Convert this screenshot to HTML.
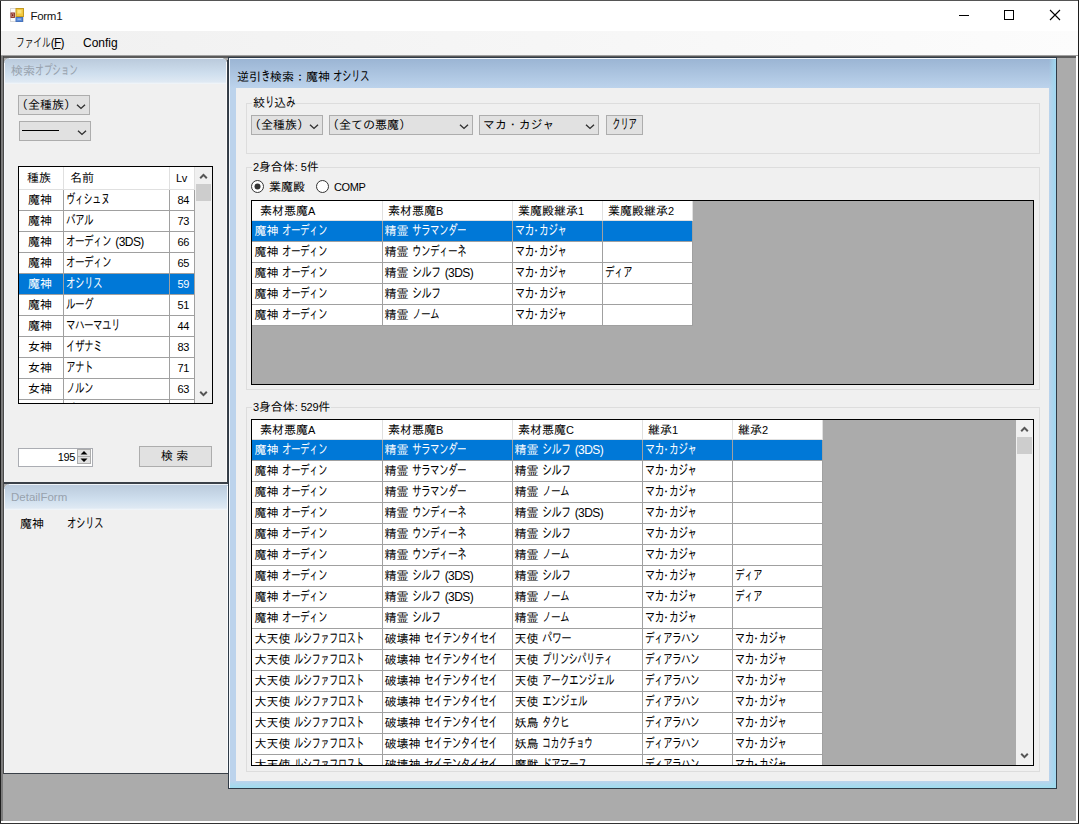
<!DOCTYPE html>
<html lang="ja"><head><meta charset="utf-8"><title>Form1</title>
<style>
html,body{margin:0;padding:0}
body{width:1079px;height:824px;overflow:hidden;position:relative;background:#ababab;
 font-family:"Liberation Sans","IPAGothic",sans-serif;font-size:12px;color:#000;}
div,span,svg{position:absolute;box-sizing:content-box}
.t{white-space:nowrap;line-height:14px}
.k{position:relative;display:inline-block;font-size:14px;letter-spacing:-1px;transform-origin:0 50%;white-space:nowrap;line-height:12px}
.l{position:relative;font-size:11px;letter-spacing:-0.35px}
.lp{position:relative;font-size:12px;letter-spacing:-0.6px;margin-left:1px}
.md{position:relative;display:inline-block;width:5px;text-indent:-3.5px;overflow:visible}
.ui{font-family:"Liberation Sans","Noto Sans CJK JP",sans-serif;-webkit-text-stroke:0}
.grid{border:1px solid #000;background:#ababab;overflow:hidden}
.gh{background:#fff;border-right:1px solid #e0e0e0;border-bottom:1px solid #e0e0e0;white-space:nowrap;overflow:hidden}
.gc{background:#fff;border-right:1px solid #a0a0a0;border-bottom:1px solid #a0a0a0;white-space:nowrap;overflow:hidden}
.gc.sel{background:#0078d7;color:#fff}
.vs{background:#f0f0f0}
.vs .arr{left:0}
.vs .thumb{left:1px;width:15px;background:#cdcdcd}
.combo{background:#e1e1e1;border:1px solid #adadad;overflow:hidden;font-size:12px}
.combo .ct{top:0;white-space:nowrap}
.combo .ct span{position:relative}
.combo .ca{right:3px;top:8px}
.pl{margin-left:-5px}
.pr{margin-right:-5px}
.gb{border:1px solid #dddddd}
.gbl{background:#f0f0f0;white-space:nowrap;line-height:14px;padding:0 1px}
</style></head><body>

<div style="left:0px;top:0px;width:1079px;height:31px;background:#fff"></div>
<div style="left:0px;top:31px;width:1079px;height:24px;background:linear-gradient(90deg,#f0f0f0,#fcfcfc)"></div>
<div style="left:0px;top:55px;width:1079px;height:1px;background:#a0a0a0"></div>
<div style="left:0px;top:56px;width:1079px;height:2px;background:#5a5a5a"></div>
<svg style="left:10px;top:8px" width="14" height="14" viewBox="0 0 14 14"><rect x="0.5" y="0.5" width="13" height="13" fill="#fbfbfb" stroke="#d9d9d9"/><rect x="6" y="0.5" width="7.5" height="8" fill="#f3c93f" stroke="#c59b23" stroke-width="1"/><rect x="7.5" y="2" width="4" height="3.5" fill="#f9e27e"/><rect x="1" y="5" width="3.4" height="4.4" fill="#d8a9a0" stroke="#8c2c20" stroke-width="1"/><rect x="2" y="6.2" width="1.4" height="2" fill="#7a2318"/><rect x="6" y="9.5" width="6.5" height="4" fill="#5c8dd8" stroke="#4673bd" stroke-width="1"/><rect x="7.5" y="10.6" width="3.5" height="1.2" fill="#9dbdf0"/></svg>
<div class="t ui" style="left:30.5px;top:8.5px;font-size:11.5px;line-height:15px;letter-spacing:-0.3px;color:#111">Form1</div>
<div class="t ui" style="left:16px;top:36px;line-height:15px"><span style="position:relative;display:inline-block;transform:scaleX(.72);transform-origin:0 50%;margin-right:-13.4px;font-weight:350">ファイル</span><span style="position:relative;font-size:12px;letter-spacing:-0.7px">(<u>F</u>)</span></div>
<div class="t ui" style="left:83px;top:36px;line-height:15px">Config</div>
<svg style="left:950px;top:1px" width="128" height="30" viewBox="0 0 128 30"><path d="M9 14.5 H19" stroke="#000" stroke-width="1"/><rect x="54.5" y="9.5" width="9" height="9" fill="none" stroke="#000" stroke-width="1"/><path d="M100 9 L110 19 M110 9 L100 19" stroke="#000" stroke-width="1.1"/></svg>
<div style="left:0px;top:0px;width:1px;height:824px;background:#1e1e1e"></div>
<div style="left:0px;top:0px;width:1079px;height:1px;background:#555"></div>
<div style="left:1px;top:56px;width:2px;height:766px;background:#7c7c7c"></div>
<div style="left:3px;top:56px;width:1px;height:718px;background:#4a4a4a"></div>
<div style="left:1076px;top:56px;width:2px;height:767px;background:#fff"></div>
<div style="left:1078px;top:0px;width:1px;height:824px;background:#1e1e1e"></div>
<div style="left:1px;top:821px;width:1077px;height:2px;background:#fff"></div>
<div style="left:0px;top:823px;width:1079px;height:1px;background:#333"></div>
<div style="left:4px;top:58px;width:223px;height:425px;background:#f0f0f0;border-radius:6px 6px 0 0;"></div>
<div style="left:4px;top:58px;width:223px;height:26px;background:linear-gradient(#b9c9db 0%,#cfdfee 60%,#dfe9f3 92%,#f4f7fa 100%);border-radius:6px 6px 0 0"></div>
<div style="left:226px;top:62px;width:1px;height:421px;background:#fafafa"></div>
<div style="left:227px;top:60px;width:1px;height:423px;background:#3a4048"></div>
<div style="left:9px;top:58px;width:214px;height:1px;background:#eef3f8"></div>
<div style="left:4px;top:63px;width:1px;height:419px;background:#f6f8fb"></div>
<div class="t " style="left:11px;top:64px;color:#98a2ad">検索<span class="k" style="transform:scaleX(0.654);margin-right:-22.50px">オプション</span></div>
<div class="combo" style="left:18px;top:95px;width:70px;height:18px"><span class="ct" style="left:2px;line-height:18px"><span class="pl">（</span>全種族<span class="pr">）</span></span><svg class="ca" width="10" height="6" viewBox="0 0 10 6"><path d="M1 0.7 L5 4.4 L9 0.7" fill="none" stroke="#303030" stroke-width="1.4"/></svg></div>
<div class="combo" style="left:19px;top:121px;width:70px;height:18px"><span class="ct" style="left:2px;line-height:18px"><span style="display:inline-block;width:37px;height:1px;background:#000;vertical-align:middle;top:-1px"></span></span><svg class="ca" width="10" height="6" viewBox="0 0 10 6"><path d="M1 0.7 L5 4.4 L9 0.7" fill="none" stroke="#303030" stroke-width="1.4"/></svg></div>
<div class="grid" style="left:18px;top:166px;width:193px;height:236px"><div class="gh" style="left:0px;top:0;width:36px;height:22px;line-height:23px;padding-left:8px">種族</div><div class="gh" style="left:45px;top:0;width:99px;height:22px;line-height:23px;padding-left:6px">名前</div><div class="gh" style="left:151px;top:0;width:18px;height:22px;line-height:23px;padding-left:6px"><span class="l">Lv</span></div><div class="gc" style="left:0px;top:23px;height:20px;line-height:21px;padding-left:9px;width:35px;">魔神</div><div class="gc" style="left:45px;top:23px;height:20px;line-height:21px;padding-left:2px;width:103px;"><span class="k" style="transform:scaleX(0.669);margin-right:-21.50px">ヴィシュヌ</span></div><div class="gc" style="left:151px;top:23px;height:20px;line-height:21px;text-align:right;padding-right:5px;width:19px;"><span class="l">84</span></div><div class="gc" style="left:0px;top:44px;height:20px;line-height:21px;padding-left:9px;width:35px;">魔神</div><div class="gc" style="left:45px;top:44px;height:20px;line-height:21px;padding-left:2px;width:103px;"><span class="k" style="transform:scaleX(0.692);margin-right:-12.00px">バアル</span></div><div class="gc" style="left:151px;top:44px;height:20px;line-height:21px;text-align:right;padding-right:5px;width:19px;"><span class="l">73</span></div><div class="gc" style="left:0px;top:65px;height:20px;line-height:21px;padding-left:9px;width:35px;">魔神</div><div class="gc" style="left:45px;top:65px;height:20px;line-height:21px;padding-left:2px;width:103px;"><span class="k" style="transform:scaleX(0.692);margin-right:-20.00px">オーディン</span> <span class="lp">(3DS)</span></div><div class="gc" style="left:151px;top:65px;height:20px;line-height:21px;text-align:right;padding-right:5px;width:19px;"><span class="l">66</span></div><div class="gc" style="left:0px;top:86px;height:20px;line-height:21px;padding-left:9px;width:35px;">魔神</div><div class="gc" style="left:45px;top:86px;height:20px;line-height:21px;padding-left:2px;width:103px;"><span class="k" style="transform:scaleX(0.692);margin-right:-20.00px">オーディン</span></div><div class="gc" style="left:151px;top:86px;height:20px;line-height:21px;text-align:right;padding-right:5px;width:19px;"><span class="l">65</span></div><div class="gc sel" style="left:0px;top:107px;height:20px;line-height:21px;padding-left:9px;width:35px;">魔神</div><div class="gc sel" style="left:45px;top:107px;height:20px;line-height:21px;padding-left:2px;width:103px;"><span class="k" style="transform:scaleX(0.692);margin-right:-16.00px">オシリス</span></div><div class="gc sel" style="left:151px;top:107px;height:20px;line-height:21px;text-align:right;padding-right:5px;width:19px;"><span class="l">59</span></div><div class="gc" style="left:0px;top:128px;height:20px;line-height:21px;padding-left:9px;width:35px;">魔神</div><div class="gc" style="left:45px;top:128px;height:20px;line-height:21px;padding-left:2px;width:103px;"><span class="k" style="transform:scaleX(0.692);margin-right:-12.00px">ルーグ</span></div><div class="gc" style="left:151px;top:128px;height:20px;line-height:21px;text-align:right;padding-right:5px;width:19px;"><span class="l">51</span></div><div class="gc" style="left:0px;top:149px;height:20px;line-height:21px;padding-left:9px;width:35px;">魔神</div><div class="gc" style="left:45px;top:149px;height:20px;line-height:21px;padding-left:2px;width:103px;"><span class="k" style="transform:scaleX(0.692);margin-right:-24.00px">マハーマユリ</span></div><div class="gc" style="left:151px;top:149px;height:20px;line-height:21px;text-align:right;padding-right:5px;width:19px;"><span class="l">44</span></div><div class="gc" style="left:0px;top:170px;height:20px;line-height:21px;padding-left:9px;width:35px;">女神</div><div class="gc" style="left:45px;top:170px;height:20px;line-height:21px;padding-left:2px;width:103px;"><span class="k" style="transform:scaleX(0.692);margin-right:-16.00px">イザナミ</span></div><div class="gc" style="left:151px;top:170px;height:20px;line-height:21px;text-align:right;padding-right:5px;width:19px;"><span class="l">83</span></div><div class="gc" style="left:0px;top:191px;height:20px;line-height:21px;padding-left:9px;width:35px;">女神</div><div class="gc" style="left:45px;top:191px;height:20px;line-height:21px;padding-left:2px;width:103px;"><span class="k" style="transform:scaleX(0.692);margin-right:-12.00px">アナト</span></div><div class="gc" style="left:151px;top:191px;height:20px;line-height:21px;text-align:right;padding-right:5px;width:19px;"><span class="l">71</span></div><div class="gc" style="left:0px;top:212px;height:20px;line-height:21px;padding-left:9px;width:35px;">女神</div><div class="gc" style="left:45px;top:212px;height:20px;line-height:21px;padding-left:2px;width:103px;"><span class="k" style="transform:scaleX(0.692);margin-right:-12.00px">ノルン</span></div><div class="gc" style="left:151px;top:212px;height:20px;line-height:21px;text-align:right;padding-right:5px;width:19px;"><span class="l">63</span></div><div class="gc" style="left:0px;top:233px;height:20px;line-height:21px;padding-left:9px;width:35px;">女神</div><div class="gc" style="left:45px;top:233px;height:20px;line-height:21px;padding-left:2px;width:103px;"><span class="k" style="transform:scaleX(0.692);margin-right:-24.00px">パールバティ</span></div><div class="gc" style="left:151px;top:233px;height:20px;line-height:21px;text-align:right;padding-right:5px;width:19px;"><span class="l">57</span></div><div class="vs" style="left:176px;top:0;width:17px;height:236px"><svg class="arr" style="top:0" width="17" height="17" viewBox="0 0 17 17"><path d="M5.2 11.2 L8.5 7.9 L11.8 11.2" fill="none" stroke="#555" stroke-width="2"/></svg><div class="thumb" style="top:17px;height:17px"></div><svg class="arr" style="bottom:0" width="17" height="17" viewBox="0 0 17 17"><path d="M5.2 5.8 L8.5 9.1 L11.8 5.8" fill="none" stroke="#555" stroke-width="2"/></svg></div></div>
<div style="left:18px;top:448px;width:73px;height:17px;background:#fff;border:1px solid #abadb3"></div>
<div class="t " style="left:30px;top:449.5px;width:45px;text-align:right"><span class="l">195</span></div>
<div style="left:77px;top:449px;width:14px;height:15px;background:#e1e1e1;box-shadow:inset 0 0 0 1px #adadad"></div>
<svg style="left:77px;top:449px" width="14" height="15" viewBox="0 0 14 15"><path d="M3.5 5.5 L7 2 L10.5 5.5 Z M3.5 9.5 L7 13 L10.5 9.5 Z" fill="#000"/><path d="M0 7.5 H14" stroke="#adadad"/></svg>
<div style="left:139px;top:446px;width:71px;height:19px;background:#e1e1e1;border:1px solid #adadad"></div>
<div class="t " style="left:161px;top:449px;">検 索</div>
<div style="left:4px;top:482px;width:224px;height:2px;background:#3a4048"></div>
<div style="left:4px;top:484px;width:224px;height:289px;background:#f0f0f0;border-radius:6px 0 0 0"></div>
<div style="left:4px;top:484px;width:224px;height:26px;background:linear-gradient(#b9c9db 0%,#cfdfee 60%,#dfe9f3 92%,#f4f7fa 100%);border-radius:6px 0 0 0"></div>
<div style="left:227px;top:486px;width:1px;height:287px;background:#f8fafc"></div>
<div style="left:4px;top:773px;width:224px;height:1px;background:#3a4048"></div>
<div style="left:9px;top:484px;width:219px;height:1px;background:#eef3f8"></div>
<div style="left:4px;top:489px;width:1px;height:284px;background:#f6f8fb"></div>
<div class="t ui" style="left:11px;top:490px;color:#98a2ad;line-height:15px;font-size:11.5px">DetailForm</div>
<div class="t " style="left:20px;top:517px;">魔神</div>
<div class="t " style="left:67px;top:517px;"><span class="k" style="transform:scaleX(0.692);margin-right:-16.00px">オシリス</span></div>
<div style="left:228px;top:57px;width:827px;height:730px;border:1px solid #2f3a46;background:linear-gradient(#9ab4d3 0px,#bcd3ec 30px,#bcd3ec 100%)"></div>
<div style="left:1049px;top:59px;width:7px;height:728px;background:linear-gradient(90deg,rgba(159,215,240,0) 0%,rgba(159,215,240,.55) 45%,#9fd7f0 100%)"></div>
<div style="left:229px;top:781px;width:827px;height:7px;background:linear-gradient(rgba(159,220,238,0) 0%,rgba(159,220,238,.5) 45%,#9fdcee 100%)"></div>
<div style="left:229px;top:58px;width:827px;height:1px;background:#f4f8fc"></div>
<div style="left:229px;top:58px;width:1px;height:730px;background:#f4f8fc"></div>
<div style="left:236px;top:88px;width:813px;height:693px;background:#f0f0f0"></div>
<div class="t " style="left:237px;top:70px;">逆引<span class="k" style="transform:scaleX(0.692);margin-right:-4.00px">き</span>検索：魔神 <span class="k" style="transform:scaleX(0.692);margin-right:-16.00px">オシリス</span></div>
<div class="gb" style="left:246px;top:103px;width:792px;height:49px;"></div>
<div class="gbl" style="left:252px;top:96px">絞<span class="k" style="transform:scaleX(0.692);margin-right:-4.00px">り</span>込<span class="k" style="transform:scaleX(0.692);margin-right:-4.00px">み</span></div>
<div class="gb" style="left:246px;top:167px;width:792px;height:221px;"></div>
<div class="gbl" style="left:252px;top:160px"><span class="l">2</span>身合体<span class="l">:</span> <span class="l">5</span>件</div>
<div class="gb" style="left:246px;top:407px;width:792px;height:363px;"></div>
<div class="gbl" style="left:252px;top:400px"><span class="l">3</span>身合体<span class="l">:</span> <span class="l">529</span>件</div>
<div class="combo" style="left:251px;top:115px;width:70px;height:18px"><span class="ct" style="left:2px;line-height:18px"><span class="pl">（</span>全種族<span class="pr">）</span></span><svg class="ca" width="10" height="6" viewBox="0 0 10 6"><path d="M1 0.7 L5 4.4 L9 0.7" fill="none" stroke="#303030" stroke-width="1.4"/></svg></div>
<div class="combo" style="left:329px;top:115px;width:142px;height:18px"><span class="ct" style="left:2px;line-height:18px"><span class="pl">（</span>全ての悪魔<span class="pr">）</span></span><svg class="ca" width="10" height="6" viewBox="0 0 10 6"><path d="M1 0.7 L5 4.4 L9 0.7" fill="none" stroke="#303030" stroke-width="1.4"/></svg></div>
<div class="combo" style="left:479px;top:115px;width:118px;height:18px"><span class="ct" style="left:3px;line-height:18px"><span style="letter-spacing:-0.1px">マカ・カジャ</span></span><svg class="ca" width="10" height="6" viewBox="0 0 10 6"><path d="M1 0.7 L5 4.4 L9 0.7" fill="none" stroke="#303030" stroke-width="1.4"/></svg></div>
<div style="left:606px;top:115px;width:35px;height:18px;background:#e1e1e1;border:1px solid #adadad"></div>
<div class="t " style="left:612px;top:118px;"><span class="k" style="transform:scaleX(0.628);margin-right:-14.50px">クリア</span></div>
<svg style="left:251px;top:180px" width="13" height="13" viewBox="0 0 13 13"><circle cx="6.5" cy="6.5" r="6" fill="#fff" stroke="#333"/><circle cx="6.5" cy="6.5" r="3" fill="#333"/></svg>
<div class="t " style="left:269px;top:180px;">業魔殿</div>
<svg style="left:316px;top:180px" width="13" height="13" viewBox="0 0 13 13"><circle cx="6.5" cy="6.5" r="6" fill="#fff" stroke="#333"/></svg>
<div class="t " style="left:334px;top:180px;"><span class="l">COMP</span></div>
<div class="grid" style="left:251px;top:200px;width:781px;height:183px"><div class="gh" style="left:0px;top:0;width:122px;height:19px;line-height:20px;padding-left:8px">素材悪魔<span class="l">A</span></div><div class="gh" style="left:131px;top:0;width:124px;height:19px;line-height:20px;padding-left:5px">素材悪魔<span class="l">B</span></div><div class="gh" style="left:261px;top:0;width:84px;height:19px;line-height:20px;padding-left:5px">業魔殿継承<span class="l">1</span></div><div class="gh" style="left:351px;top:0;width:84px;height:19px;line-height:20px;padding-left:5px">業魔殿継承<span class="l">2</span></div><div class="gc sel" style="left:0px;top:20px;height:20px;line-height:21px;padding-left:2.5px;width:127.5px;">魔神 <span class="k" style="transform:scaleX(0.692);margin-right:-20.00px">オーディン</span></div><div class="gc sel" style="left:131px;top:20px;height:20px;line-height:21px;padding-left:1.5px;width:127.5px;">精霊 <span class="k" style="transform:scaleX(0.692);margin-right:-24.00px">サラマンダー</span></div><div class="gc sel" style="left:261px;top:20px;height:20px;line-height:21px;padding-left:1.5px;width:87.5px;"><span class="k" style="transform:scaleX(0.731);margin-right:-7.00px">マカ</span><span class="md">・</span><span class="k" style="transform:scaleX(0.705);margin-right:-11.50px">カジャ</span></div><div class="gc sel" style="left:351px;top:20px;height:20px;line-height:21px;padding-left:1.5px;width:87.5px;"></div><div class="gc" style="left:0px;top:41px;height:20px;line-height:21px;padding-left:2.5px;width:127.5px;">魔神 <span class="k" style="transform:scaleX(0.692);margin-right:-20.00px">オーディン</span></div><div class="gc" style="left:131px;top:41px;height:20px;line-height:21px;padding-left:1.5px;width:127.5px;">精霊 <span class="k" style="transform:scaleX(0.692);margin-right:-24.00px">ウンディーネ</span></div><div class="gc" style="left:261px;top:41px;height:20px;line-height:21px;padding-left:1.5px;width:87.5px;"><span class="k" style="transform:scaleX(0.731);margin-right:-7.00px">マカ</span><span class="md">・</span><span class="k" style="transform:scaleX(0.705);margin-right:-11.50px">カジャ</span></div><div class="gc" style="left:351px;top:41px;height:20px;line-height:21px;padding-left:1.5px;width:87.5px;"></div><div class="gc" style="left:0px;top:62px;height:20px;line-height:21px;padding-left:2.5px;width:127.5px;">魔神 <span class="k" style="transform:scaleX(0.692);margin-right:-20.00px">オーディン</span></div><div class="gc" style="left:131px;top:62px;height:20px;line-height:21px;padding-left:1.5px;width:127.5px;">精霊 <span class="k" style="transform:scaleX(0.731);margin-right:-10.50px">シルフ</span> <span class="lp">(3DS)</span></div><div class="gc" style="left:261px;top:62px;height:20px;line-height:21px;padding-left:1.5px;width:87.5px;"><span class="k" style="transform:scaleX(0.731);margin-right:-7.00px">マカ</span><span class="md">・</span><span class="k" style="transform:scaleX(0.705);margin-right:-11.50px">カジャ</span></div><div class="gc" style="left:351px;top:62px;height:20px;line-height:21px;padding-left:1.5px;width:87.5px;"><span class="k" style="transform:scaleX(0.692);margin-right:-12.00px">ディア</span></div><div class="gc" style="left:0px;top:83px;height:20px;line-height:21px;padding-left:2.5px;width:127.5px;">魔神 <span class="k" style="transform:scaleX(0.692);margin-right:-20.00px">オーディン</span></div><div class="gc" style="left:131px;top:83px;height:20px;line-height:21px;padding-left:1.5px;width:127.5px;">精霊 <span class="k" style="transform:scaleX(0.731);margin-right:-10.50px">シルフ</span></div><div class="gc" style="left:261px;top:83px;height:20px;line-height:21px;padding-left:1.5px;width:87.5px;"><span class="k" style="transform:scaleX(0.731);margin-right:-7.00px">マカ</span><span class="md">・</span><span class="k" style="transform:scaleX(0.705);margin-right:-11.50px">カジャ</span></div><div class="gc" style="left:351px;top:83px;height:20px;line-height:21px;padding-left:1.5px;width:87.5px;"></div><div class="gc" style="left:0px;top:104px;height:20px;line-height:21px;padding-left:2.5px;width:127.5px;">魔神 <span class="k" style="transform:scaleX(0.692);margin-right:-20.00px">オーディン</span></div><div class="gc" style="left:131px;top:104px;height:20px;line-height:21px;padding-left:1.5px;width:127.5px;">精霊 <span class="k" style="transform:scaleX(0.692);margin-right:-12.00px">ノーム</span></div><div class="gc" style="left:261px;top:104px;height:20px;line-height:21px;padding-left:1.5px;width:87.5px;"><span class="k" style="transform:scaleX(0.731);margin-right:-7.00px">マカ</span><span class="md">・</span><span class="k" style="transform:scaleX(0.705);margin-right:-11.50px">カジャ</span></div><div class="gc" style="left:351px;top:104px;height:20px;line-height:21px;padding-left:1.5px;width:87.5px;"></div></div>
<div class="grid" style="left:251px;top:419px;width:781px;height:345px"><div class="gh" style="left:0px;top:0;width:122px;height:19px;line-height:20px;padding-left:8px">素材悪魔<span class="l">A</span></div><div class="gh" style="left:131px;top:0;width:124px;height:19px;line-height:20px;padding-left:5px">素材悪魔<span class="l">B</span></div><div class="gh" style="left:261px;top:0;width:124px;height:19px;line-height:20px;padding-left:5px">素材悪魔<span class="l">C</span></div><div class="gh" style="left:391px;top:0;width:84px;height:19px;line-height:20px;padding-left:5px">継承<span class="l">1</span></div><div class="gh" style="left:481px;top:0;width:84px;height:19px;line-height:20px;padding-left:5px">継承<span class="l">2</span></div><div class="gc sel" style="left:0px;top:20px;height:20px;line-height:21px;padding-left:2.5px;width:127.5px;">魔神 <span class="k" style="transform:scaleX(0.692);margin-right:-20.00px">オーディン</span></div><div class="gc sel" style="left:131px;top:20px;height:20px;line-height:21px;padding-left:1.5px;width:127.5px;">精霊 <span class="k" style="transform:scaleX(0.692);margin-right:-24.00px">サラマンダー</span></div><div class="gc sel" style="left:261px;top:20px;height:20px;line-height:21px;padding-left:1.5px;width:127.5px;">精霊 <span class="k" style="transform:scaleX(0.731);margin-right:-10.50px">シルフ</span> <span class="lp">(3DS)</span></div><div class="gc sel" style="left:391px;top:20px;height:20px;line-height:21px;padding-left:1.5px;width:87.5px;"><span class="k" style="transform:scaleX(0.731);margin-right:-7.00px">マカ</span><span class="md">・</span><span class="k" style="transform:scaleX(0.705);margin-right:-11.50px">カジャ</span></div><div class="gc sel" style="left:481px;top:20px;height:20px;line-height:21px;padding-left:1.5px;width:87.5px;"></div><div class="gc" style="left:0px;top:41px;height:20px;line-height:21px;padding-left:2.5px;width:127.5px;">魔神 <span class="k" style="transform:scaleX(0.692);margin-right:-20.00px">オーディン</span></div><div class="gc" style="left:131px;top:41px;height:20px;line-height:21px;padding-left:1.5px;width:127.5px;">精霊 <span class="k" style="transform:scaleX(0.692);margin-right:-24.00px">サラマンダー</span></div><div class="gc" style="left:261px;top:41px;height:20px;line-height:21px;padding-left:1.5px;width:127.5px;">精霊 <span class="k" style="transform:scaleX(0.731);margin-right:-10.50px">シルフ</span></div><div class="gc" style="left:391px;top:41px;height:20px;line-height:21px;padding-left:1.5px;width:87.5px;"><span class="k" style="transform:scaleX(0.731);margin-right:-7.00px">マカ</span><span class="md">・</span><span class="k" style="transform:scaleX(0.705);margin-right:-11.50px">カジャ</span></div><div class="gc" style="left:481px;top:41px;height:20px;line-height:21px;padding-left:1.5px;width:87.5px;"></div><div class="gc" style="left:0px;top:62px;height:20px;line-height:21px;padding-left:2.5px;width:127.5px;">魔神 <span class="k" style="transform:scaleX(0.692);margin-right:-20.00px">オーディン</span></div><div class="gc" style="left:131px;top:62px;height:20px;line-height:21px;padding-left:1.5px;width:127.5px;">精霊 <span class="k" style="transform:scaleX(0.692);margin-right:-24.00px">サラマンダー</span></div><div class="gc" style="left:261px;top:62px;height:20px;line-height:21px;padding-left:1.5px;width:127.5px;">精霊 <span class="k" style="transform:scaleX(0.692);margin-right:-12.00px">ノーム</span></div><div class="gc" style="left:391px;top:62px;height:20px;line-height:21px;padding-left:1.5px;width:87.5px;"><span class="k" style="transform:scaleX(0.731);margin-right:-7.00px">マカ</span><span class="md">・</span><span class="k" style="transform:scaleX(0.705);margin-right:-11.50px">カジャ</span></div><div class="gc" style="left:481px;top:62px;height:20px;line-height:21px;padding-left:1.5px;width:87.5px;"></div><div class="gc" style="left:0px;top:83px;height:20px;line-height:21px;padding-left:2.5px;width:127.5px;">魔神 <span class="k" style="transform:scaleX(0.692);margin-right:-20.00px">オーディン</span></div><div class="gc" style="left:131px;top:83px;height:20px;line-height:21px;padding-left:1.5px;width:127.5px;">精霊 <span class="k" style="transform:scaleX(0.692);margin-right:-24.00px">ウンディーネ</span></div><div class="gc" style="left:261px;top:83px;height:20px;line-height:21px;padding-left:1.5px;width:127.5px;">精霊 <span class="k" style="transform:scaleX(0.731);margin-right:-10.50px">シルフ</span> <span class="lp">(3DS)</span></div><div class="gc" style="left:391px;top:83px;height:20px;line-height:21px;padding-left:1.5px;width:87.5px;"><span class="k" style="transform:scaleX(0.731);margin-right:-7.00px">マカ</span><span class="md">・</span><span class="k" style="transform:scaleX(0.705);margin-right:-11.50px">カジャ</span></div><div class="gc" style="left:481px;top:83px;height:20px;line-height:21px;padding-left:1.5px;width:87.5px;"></div><div class="gc" style="left:0px;top:104px;height:20px;line-height:21px;padding-left:2.5px;width:127.5px;">魔神 <span class="k" style="transform:scaleX(0.692);margin-right:-20.00px">オーディン</span></div><div class="gc" style="left:131px;top:104px;height:20px;line-height:21px;padding-left:1.5px;width:127.5px;">精霊 <span class="k" style="transform:scaleX(0.692);margin-right:-24.00px">ウンディーネ</span></div><div class="gc" style="left:261px;top:104px;height:20px;line-height:21px;padding-left:1.5px;width:127.5px;">精霊 <span class="k" style="transform:scaleX(0.731);margin-right:-10.50px">シルフ</span></div><div class="gc" style="left:391px;top:104px;height:20px;line-height:21px;padding-left:1.5px;width:87.5px;"><span class="k" style="transform:scaleX(0.731);margin-right:-7.00px">マカ</span><span class="md">・</span><span class="k" style="transform:scaleX(0.705);margin-right:-11.50px">カジャ</span></div><div class="gc" style="left:481px;top:104px;height:20px;line-height:21px;padding-left:1.5px;width:87.5px;"></div><div class="gc" style="left:0px;top:125px;height:20px;line-height:21px;padding-left:2.5px;width:127.5px;">魔神 <span class="k" style="transform:scaleX(0.692);margin-right:-20.00px">オーディン</span></div><div class="gc" style="left:131px;top:125px;height:20px;line-height:21px;padding-left:1.5px;width:127.5px;">精霊 <span class="k" style="transform:scaleX(0.692);margin-right:-24.00px">ウンディーネ</span></div><div class="gc" style="left:261px;top:125px;height:20px;line-height:21px;padding-left:1.5px;width:127.5px;">精霊 <span class="k" style="transform:scaleX(0.692);margin-right:-12.00px">ノーム</span></div><div class="gc" style="left:391px;top:125px;height:20px;line-height:21px;padding-left:1.5px;width:87.5px;"><span class="k" style="transform:scaleX(0.731);margin-right:-7.00px">マカ</span><span class="md">・</span><span class="k" style="transform:scaleX(0.705);margin-right:-11.50px">カジャ</span></div><div class="gc" style="left:481px;top:125px;height:20px;line-height:21px;padding-left:1.5px;width:87.5px;"></div><div class="gc" style="left:0px;top:146px;height:20px;line-height:21px;padding-left:2.5px;width:127.5px;">魔神 <span class="k" style="transform:scaleX(0.692);margin-right:-20.00px">オーディン</span></div><div class="gc" style="left:131px;top:146px;height:20px;line-height:21px;padding-left:1.5px;width:127.5px;">精霊 <span class="k" style="transform:scaleX(0.731);margin-right:-10.50px">シルフ</span> <span class="lp">(3DS)</span></div><div class="gc" style="left:261px;top:146px;height:20px;line-height:21px;padding-left:1.5px;width:127.5px;">精霊 <span class="k" style="transform:scaleX(0.731);margin-right:-10.50px">シルフ</span></div><div class="gc" style="left:391px;top:146px;height:20px;line-height:21px;padding-left:1.5px;width:87.5px;"><span class="k" style="transform:scaleX(0.731);margin-right:-7.00px">マカ</span><span class="md">・</span><span class="k" style="transform:scaleX(0.705);margin-right:-11.50px">カジャ</span></div><div class="gc" style="left:481px;top:146px;height:20px;line-height:21px;padding-left:1.5px;width:87.5px;"><span class="k" style="transform:scaleX(0.692);margin-right:-12.00px">ディア</span></div><div class="gc" style="left:0px;top:167px;height:20px;line-height:21px;padding-left:2.5px;width:127.5px;">魔神 <span class="k" style="transform:scaleX(0.692);margin-right:-20.00px">オーディン</span></div><div class="gc" style="left:131px;top:167px;height:20px;line-height:21px;padding-left:1.5px;width:127.5px;">精霊 <span class="k" style="transform:scaleX(0.731);margin-right:-10.50px">シルフ</span> <span class="lp">(3DS)</span></div><div class="gc" style="left:261px;top:167px;height:20px;line-height:21px;padding-left:1.5px;width:127.5px;">精霊 <span class="k" style="transform:scaleX(0.692);margin-right:-12.00px">ノーム</span></div><div class="gc" style="left:391px;top:167px;height:20px;line-height:21px;padding-left:1.5px;width:87.5px;"><span class="k" style="transform:scaleX(0.731);margin-right:-7.00px">マカ</span><span class="md">・</span><span class="k" style="transform:scaleX(0.705);margin-right:-11.50px">カジャ</span></div><div class="gc" style="left:481px;top:167px;height:20px;line-height:21px;padding-left:1.5px;width:87.5px;"><span class="k" style="transform:scaleX(0.692);margin-right:-12.00px">ディア</span></div><div class="gc" style="left:0px;top:188px;height:20px;line-height:21px;padding-left:2.5px;width:127.5px;">魔神 <span class="k" style="transform:scaleX(0.692);margin-right:-20.00px">オーディン</span></div><div class="gc" style="left:131px;top:188px;height:20px;line-height:21px;padding-left:1.5px;width:127.5px;">精霊 <span class="k" style="transform:scaleX(0.731);margin-right:-10.50px">シルフ</span></div><div class="gc" style="left:261px;top:188px;height:20px;line-height:21px;padding-left:1.5px;width:127.5px;">精霊 <span class="k" style="transform:scaleX(0.692);margin-right:-12.00px">ノーム</span></div><div class="gc" style="left:391px;top:188px;height:20px;line-height:21px;padding-left:1.5px;width:87.5px;"><span class="k" style="transform:scaleX(0.731);margin-right:-7.00px">マカ</span><span class="md">・</span><span class="k" style="transform:scaleX(0.705);margin-right:-11.50px">カジャ</span></div><div class="gc" style="left:481px;top:188px;height:20px;line-height:21px;padding-left:1.5px;width:87.5px;"></div><div class="gc" style="left:0px;top:209px;height:20px;line-height:21px;padding-left:2.5px;width:127.5px;">大天使 <span class="k" style="transform:scaleX(0.673);margin-right:-34.00px">ルシファフロスト</span></div><div class="gc" style="left:131px;top:209px;height:20px;line-height:21px;padding-left:1.5px;width:127.5px;">破壊神 <span class="k" style="transform:scaleX(0.707);margin-right:-30.50px">セイテンタイセイ</span></div><div class="gc" style="left:261px;top:209px;height:20px;line-height:21px;padding-left:1.5px;width:127.5px;">天使 <span class="k" style="transform:scaleX(0.744);margin-right:-10.00px">パワー</span></div><div class="gc" style="left:391px;top:209px;height:20px;line-height:21px;padding-left:1.5px;width:87.5px;"><span class="k" style="transform:scaleX(0.692);margin-right:-24.00px">ディアラハン</span></div><div class="gc" style="left:481px;top:209px;height:20px;line-height:21px;padding-left:1.5px;width:87.5px;"><span class="k" style="transform:scaleX(0.731);margin-right:-7.00px">マカ</span><span class="md">・</span><span class="k" style="transform:scaleX(0.705);margin-right:-11.50px">カジャ</span></div><div class="gc" style="left:0px;top:230px;height:20px;line-height:21px;padding-left:2.5px;width:127.5px;">大天使 <span class="k" style="transform:scaleX(0.673);margin-right:-34.00px">ルシファフロスト</span></div><div class="gc" style="left:131px;top:230px;height:20px;line-height:21px;padding-left:1.5px;width:127.5px;">破壊神 <span class="k" style="transform:scaleX(0.707);margin-right:-30.50px">セイテンタイセイ</span></div><div class="gc" style="left:261px;top:230px;height:20px;line-height:21px;padding-left:1.5px;width:127.5px;">天使 <span class="k" style="transform:scaleX(0.678);margin-right:-33.50px">プリンシパリティ</span></div><div class="gc" style="left:391px;top:230px;height:20px;line-height:21px;padding-left:1.5px;width:87.5px;"><span class="k" style="transform:scaleX(0.692);margin-right:-24.00px">ディアラハン</span></div><div class="gc" style="left:481px;top:230px;height:20px;line-height:21px;padding-left:1.5px;width:87.5px;"><span class="k" style="transform:scaleX(0.731);margin-right:-7.00px">マカ</span><span class="md">・</span><span class="k" style="transform:scaleX(0.705);margin-right:-11.50px">カジャ</span></div><div class="gc" style="left:0px;top:251px;height:20px;line-height:21px;padding-left:2.5px;width:127.5px;">大天使 <span class="k" style="transform:scaleX(0.673);margin-right:-34.00px">ルシファフロスト</span></div><div class="gc" style="left:131px;top:251px;height:20px;line-height:21px;padding-left:1.5px;width:127.5px;">破壊神 <span class="k" style="transform:scaleX(0.707);margin-right:-30.50px">セイテンタイセイ</span></div><div class="gc" style="left:261px;top:251px;height:20px;line-height:21px;padding-left:1.5px;width:127.5px;">天使 <span class="k" style="transform:scaleX(0.692);margin-right:-32.00px">アークエンジェル</span></div><div class="gc" style="left:391px;top:251px;height:20px;line-height:21px;padding-left:1.5px;width:87.5px;"><span class="k" style="transform:scaleX(0.692);margin-right:-24.00px">ディアラハン</span></div><div class="gc" style="left:481px;top:251px;height:20px;line-height:21px;padding-left:1.5px;width:87.5px;"><span class="k" style="transform:scaleX(0.731);margin-right:-7.00px">マカ</span><span class="md">・</span><span class="k" style="transform:scaleX(0.705);margin-right:-11.50px">カジャ</span></div><div class="gc" style="left:0px;top:272px;height:20px;line-height:21px;padding-left:2.5px;width:127.5px;">大天使 <span class="k" style="transform:scaleX(0.673);margin-right:-34.00px">ルシファフロスト</span></div><div class="gc" style="left:131px;top:272px;height:20px;line-height:21px;padding-left:1.5px;width:127.5px;">破壊神 <span class="k" style="transform:scaleX(0.707);margin-right:-30.50px">セイテンタイセイ</span></div><div class="gc" style="left:261px;top:272px;height:20px;line-height:21px;padding-left:1.5px;width:127.5px;">天使 <span class="k" style="transform:scaleX(0.692);margin-right:-20.00px">エンジェル</span></div><div class="gc" style="left:391px;top:272px;height:20px;line-height:21px;padding-left:1.5px;width:87.5px;"><span class="k" style="transform:scaleX(0.692);margin-right:-24.00px">ディアラハン</span></div><div class="gc" style="left:481px;top:272px;height:20px;line-height:21px;padding-left:1.5px;width:87.5px;"><span class="k" style="transform:scaleX(0.731);margin-right:-7.00px">マカ</span><span class="md">・</span><span class="k" style="transform:scaleX(0.705);margin-right:-11.50px">カジャ</span></div><div class="gc" style="left:0px;top:293px;height:20px;line-height:21px;padding-left:2.5px;width:127.5px;">大天使 <span class="k" style="transform:scaleX(0.673);margin-right:-34.00px">ルシファフロスト</span></div><div class="gc" style="left:131px;top:293px;height:20px;line-height:21px;padding-left:1.5px;width:127.5px;">破壊神 <span class="k" style="transform:scaleX(0.707);margin-right:-30.50px">セイテンタイセイ</span></div><div class="gc" style="left:261px;top:293px;height:20px;line-height:21px;padding-left:1.5px;width:127.5px;">妖鳥 <span class="k" style="transform:scaleX(0.692);margin-right:-12.00px">タクヒ</span></div><div class="gc" style="left:391px;top:293px;height:20px;line-height:21px;padding-left:1.5px;width:87.5px;"><span class="k" style="transform:scaleX(0.692);margin-right:-24.00px">ディアラハン</span></div><div class="gc" style="left:481px;top:293px;height:20px;line-height:21px;padding-left:1.5px;width:87.5px;"><span class="k" style="transform:scaleX(0.731);margin-right:-7.00px">マカ</span><span class="md">・</span><span class="k" style="transform:scaleX(0.705);margin-right:-11.50px">カジャ</span></div><div class="gc" style="left:0px;top:314px;height:20px;line-height:21px;padding-left:2.5px;width:127.5px;">大天使 <span class="k" style="transform:scaleX(0.673);margin-right:-34.00px">ルシファフロスト</span></div><div class="gc" style="left:131px;top:314px;height:20px;line-height:21px;padding-left:1.5px;width:127.5px;">破壊神 <span class="k" style="transform:scaleX(0.707);margin-right:-30.50px">セイテンタイセイ</span></div><div class="gc" style="left:261px;top:314px;height:20px;line-height:21px;padding-left:1.5px;width:127.5px;">妖鳥 <span class="k" style="transform:scaleX(0.647);margin-right:-27.50px">コカクチョウ</span></div><div class="gc" style="left:391px;top:314px;height:20px;line-height:21px;padding-left:1.5px;width:87.5px;"><span class="k" style="transform:scaleX(0.692);margin-right:-24.00px">ディアラハン</span></div><div class="gc" style="left:481px;top:314px;height:20px;line-height:21px;padding-left:1.5px;width:87.5px;"><span class="k" style="transform:scaleX(0.731);margin-right:-7.00px">マカ</span><span class="md">・</span><span class="k" style="transform:scaleX(0.705);margin-right:-11.50px">カジャ</span></div><div class="gc" style="left:0px;top:335px;height:20px;line-height:21px;padding-left:2.5px;width:127.5px;">大天使 <span class="k" style="transform:scaleX(0.673);margin-right:-34.00px">ルシファフロスト</span></div><div class="gc" style="left:131px;top:335px;height:20px;line-height:21px;padding-left:1.5px;width:127.5px;">破壊神 <span class="k" style="transform:scaleX(0.707);margin-right:-30.50px">セイテンタイセイ</span></div><div class="gc" style="left:261px;top:335px;height:20px;line-height:21px;padding-left:1.5px;width:127.5px;">魔獣 <span class="k" style="transform:scaleX(0.692);margin-right:-20.00px">ドアマース</span></div><div class="gc" style="left:391px;top:335px;height:20px;line-height:21px;padding-left:1.5px;width:87.5px;"><span class="k" style="transform:scaleX(0.692);margin-right:-24.00px">ディアラハン</span></div><div class="gc" style="left:481px;top:335px;height:20px;line-height:21px;padding-left:1.5px;width:87.5px;"><span class="k" style="transform:scaleX(0.731);margin-right:-7.00px">マカ</span><span class="md">・</span><span class="k" style="transform:scaleX(0.705);margin-right:-11.50px">カジャ</span></div><div class="vs" style="left:764px;top:0;width:17px;height:345px"><svg class="arr" style="top:0" width="17" height="17" viewBox="0 0 17 17"><path d="M5.2 11.2 L8.5 7.9 L11.8 11.2" fill="none" stroke="#555" stroke-width="2"/></svg><div class="thumb" style="top:17px;height:17px"></div><svg class="arr" style="bottom:0" width="17" height="17" viewBox="0 0 17 17"><path d="M5.2 5.8 L8.5 9.1 L11.8 5.8" fill="none" stroke="#555" stroke-width="2"/></svg></div></div>
</body></html>
